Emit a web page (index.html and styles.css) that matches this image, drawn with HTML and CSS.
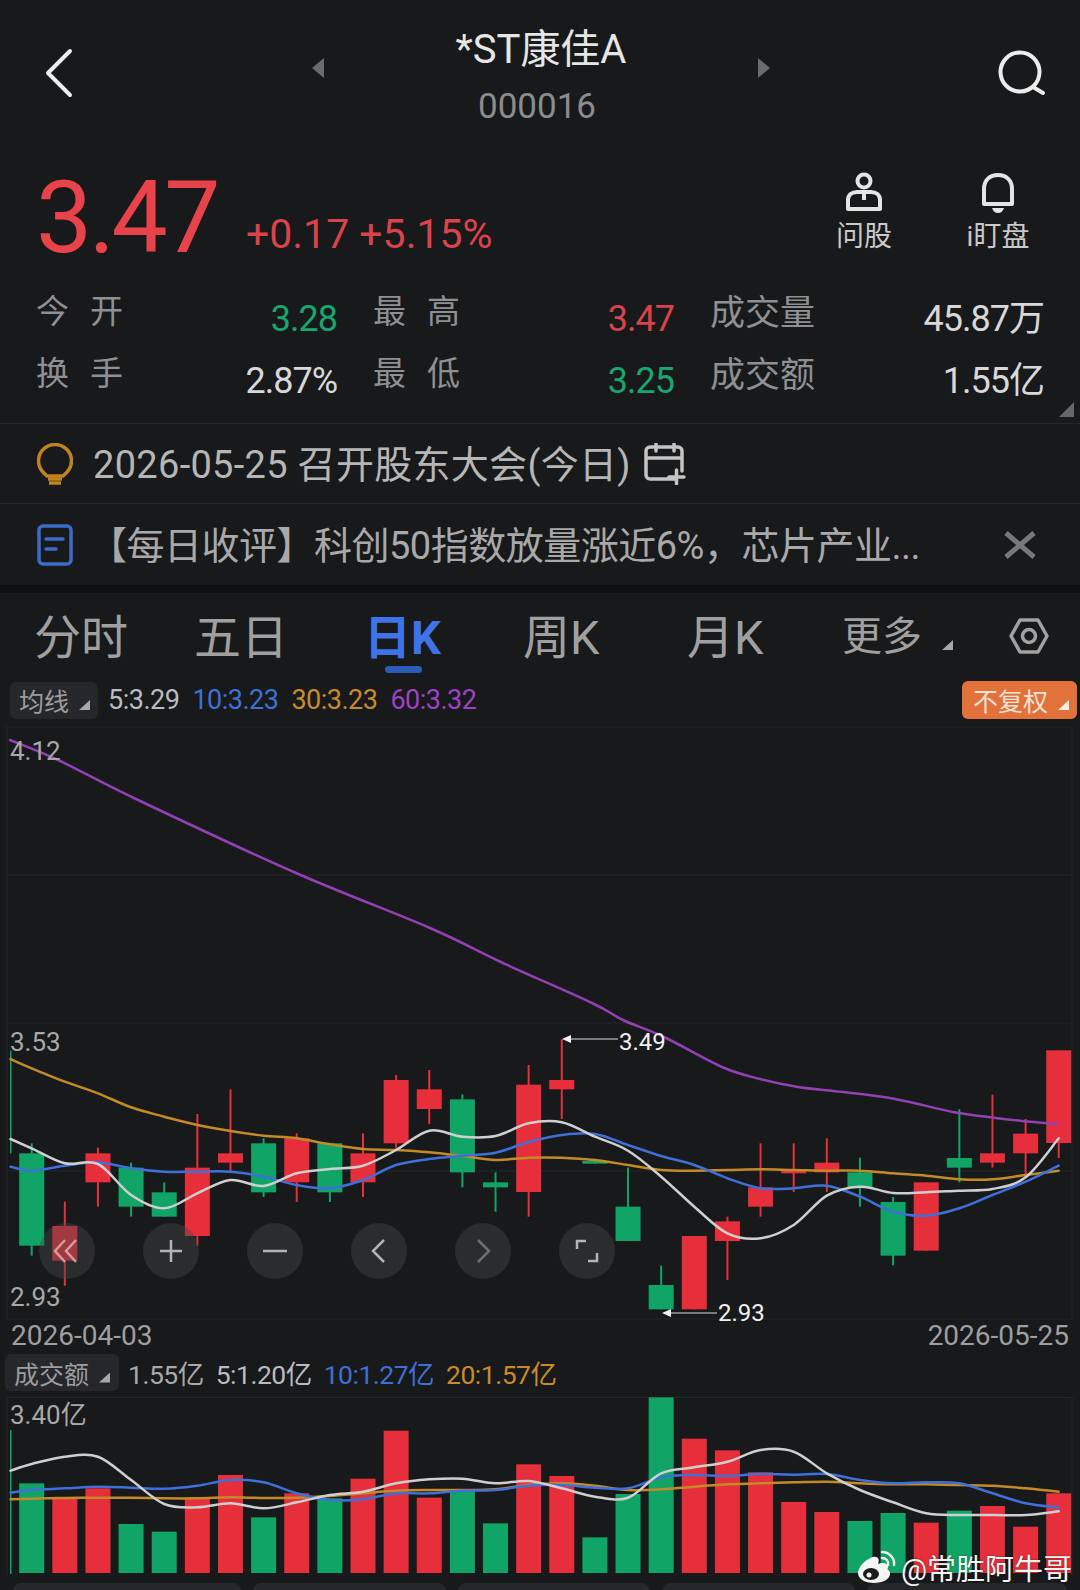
FILE: index.html
```html
<!DOCTYPE html>
<html>
<head>
    <title>*ST康佳A 000016</title>
    <meta charset="utf-8">
    <link rel="stylesheet" href="styles.css">
</head>
<body>
    <div class="page">
        <div class="header">
            <svg class="back-icon" width="30" height="50" viewBox="0 0 30 50"><path d="M25 3 3 25l22 22" /></svg>
            <span class="nav-tri nav-left"></span>
            <div class="title-box">
                <div class="title">*ST康佳A</div>
                <div class="code">000016</div>
            </div>
            <span class="nav-tri nav-right"></span>
            <svg class="search-icon" width="50" height="48" viewBox="0 0 50 48"><circle cx="23" cy="23" r="19.5" /><path d="M36 38l10 6" /></svg>
        </div>

        <div class="quote">
            <div class="price-row">
                <div class="price">3.47</div>
                <div class="change">+0.17 +5.15%</div>
                <div class="actions">
                    <div class="action">
                        <svg width="40" height="42" viewBox="0 0 40 42"><circle cx="20" cy="9" r="6.5" /><path d="M4 37V28c0-5 4-8 9-8h14c5 0 9 3 9 8v9z" /><path class="tie" d="M20 20v8" /></svg>
                        <span>问股</span>
                    </div>
                    <div class="action">
                        <svg width="40" height="42" viewBox="0 0 40 42"><path d="M6 32V17C6 8 12 3 20 3s14 5 14 14v15z" /><path class="solid" d="M14 36h12c-1 3-3 5-6 5s-5-2-6-5z" /></svg>
                        <span>i盯盘</span>
                    </div>
                </div>
            </div>
            <div class="stats">
                <div class="stat"><span class="stat-label wide">今开</span><span class="stat-value green">3.28</span></div>
                <div class="stat"><span class="stat-label wide">最高</span><span class="stat-value red">3.47</span></div>
                <div class="stat"><span class="stat-label">成交量</span><span class="stat-value">45.87万</span></div>
                <div class="stat"><span class="stat-label wide">换手</span><span class="stat-value">2.87%</span></div>
                <div class="stat"><span class="stat-label wide">最低</span><span class="stat-value green">3.25</span></div>
                <div class="stat"><span class="stat-label">成交额</span><span class="stat-value">1.55亿</span></div>
            </div>
            <span class="corner-tri"></span>
        </div>

        <div class="notice notice-event">
            <svg class="notice-icon" width="36" height="42" viewBox="0 0 36 42"><path class="bulb" d="M10 33C5 29 1.500 25 1.500 18a16.500 16.500 0 0 1 33 0c0 7-3.500 11-8.500 15z" /><path class="bulb-base" d="M11 36h14M12 40h12" /></svg>
            <span class="notice-text">2026-05-25 召开股东大会(今日)</span>
            <svg class="calendar-icon" width="42" height="42" viewBox="0 0 42 42"><path d="M30 36H6a4 4 0 0 1-4-4V8a4 4 0 0 1 4-4h28a4 4 0 0 1 4 4v20M2 15h36M12 1v7M30 1v7M25 34h15M32.500 27v14" /></svg>
        </div>

        <div class="notice notice-news">
            <svg class="notice-icon" width="36" height="42" viewBox="0 0 36 42"><rect class="doc" x="2" y="2" width="32" height="38" rx="4" /><path class="doc" d="M9 15h17M9 25h10" /></svg>
            <span class="notice-text news-text">【每日收评】科创50指数放量涨近6%，芯片产业...</span>
            <svg class="close-icon" width="32" height="28" viewBox="0 0 32 28"><path d="M2 2l28 24M30 2 2 26" /></svg>
        </div>

        <div class="band"></div>

        <div class="tabs">
            <span class="tab">分时</span>
            <span class="tab">五日</span>
            <span class="tab active">日K</span>
            <span class="tab">周K</span>
            <span class="tab">月K</span>
            <span class="tab more">更多<i class="more-tri"></i></span>
            <svg class="gear-icon" width="40" height="36" viewBox="0 0 40 36"><path d="M11 2h18l9 16-9 16H11L2 18z" /><circle cx="20" cy="18" r="6.500" /></svg>
        </div>

        <div class="ma-row">
            <span class="chip chip-ma">均线<i class="chip-tri"></i></span>
            <span class="ma ma5">5:3.29</span>
            <span class="ma ma10">10:3.23</span>
            <span class="ma ma30">30:3.23</span>
            <span class="ma ma60">60:3.32</span>
            <span class="chip chip-orange">不复权<i class="chip-tri"></i></span>
        </div>

        <div class="kline-wrap">
            <svg id="kline" class="chart" width="1080" height="606" viewBox="0 724 1080 606">
                <path class="grid" d="M7 727H1072M7 875H1072M7 1023H1072M7 1171H1072M7 1319H1072M7 727V1319M1072 727V1319" />
                <g id="kline-bars"></g>
                <g id="kline-lines"></g>
                <text class="axis" x="10" y="760">4.12</text>
                <text class="axis" x="10" y="1051">3.53</text>
                <text class="axis" x="10" y="1306">2.93</text>
                <path class="mark-line" d="M566 1039H618M666 1313H717" />
                <path class="mark-head" d="M562 1039l9-4v8zM662 1313l9-4v8z" />
                <text class="mark" x="619" y="1050">3.49</text>
                <text class="mark" x="718" y="1321">2.93</text>
            </svg>
            <div class="zoom-bar">
                <div class="zoom-btn"><svg width="32" height="32" viewBox="0 0 32 32"><path class="dim" d="M14 5 4 16l10 11M25 5 15 16l10 11" /></svg></div>
                <div class="zoom-btn"><svg width="32" height="32" viewBox="0 0 32 32"><path d="M16 5v22M5 16h22" /></svg></div>
                <div class="zoom-btn"><svg width="32" height="32" viewBox="0 0 32 32"><path d="M4 16h24" /></svg></div>
                <div class="zoom-btn"><svg width="32" height="32" viewBox="0 0 32 32"><path d="M21 5 10 16l11 11" /></svg></div>
                <div class="zoom-btn"><svg width="32" height="32" viewBox="0 0 32 32"><path class="faint" d="M11 5l11 11-11 11" /></svg></div>
                <div class="zoom-btn"><svg width="32" height="32" viewBox="0 0 32 32"><path d="M6 14V6h9M26 18v8h-9" /></svg></div>
            </div>
        </div>

        <div class="dates">
            <span>2026-04-03</span>
            <span>2026-05-25</span>
        </div>

        <div class="vol-row">
            <span class="chip chip-vol">成交额<i class="chip-tri"></i></span>
            <span class="ma vol-now">1.55亿</span>
            <span class="ma ma5">5:1.20亿</span>
            <span class="ma ma10">10:1.27亿</span>
            <span class="ma ma30">20:1.57亿</span>
        </div>

        <svg id="volume" class="chart" width="1080" height="178" viewBox="0 1397 1080 178">
            <path class="grid" d="M7 1397.500H1072M7 1397V1575M1072 1397V1575" />
            <g id="volume-bars"></g>
            <g id="volume-lines"></g>
            <text class="axis" x="10" y="1424">3.40亿</text>
        </svg>

        <div class="bottom-cards">
            <div class="card"></div>
            <div class="card"></div>
            <div class="card"></div>
            <div class="card"></div>
            <div class="card"></div>
        </div>

        <div class="watermark">
            <svg width="42" height="34" viewBox="0 0 42 34"><path class="wb-body" d="M2 23c0-6 8-14 15-16 5-1 7 2 5 7 4-2 10-1 10 3 0 1 0 2-1 2 2 1 3 3 3 5 0 5-7 9-16 9S2 29 2 23z" /><ellipse class="wb-eye" cx="15" cy="24" rx="8" ry="6" /><circle class="wb-body" cx="13" cy="25" r="2.500" /><path class="wb-arc" d="M26 2c7 0 13 6 12 13M26 8c4 0 7 3 6 7" /></svg>
            <span>@常胜阿牛哥</span>
        </div>
    </div>

    <script src="chart.js"></script>
</body>
</html>
```

FILE: styles.css
```css
* {
    box-sizing: border-box;
}
body {
    margin: 0;
    background: #18191b;
    font-family: Roboto, "Noto Sans CJK SC", sans-serif;
    font-weight: 400;
}
.page {
    position: relative;
    width: 1080px;
    height: 1590px;
    overflow: hidden;
    background: #18191b;
}

/* header */
.header {
    display: grid;
    grid-template-columns: 267px 12px 1fr 12px 277px;
    align-items: center;
    height: 146px;
    padding-left: 45px;
    padding-right: 33px;
}
.back-icon path {
    fill: none;
    stroke: #ececec;
    stroke-width: 4;
    stroke-linecap: round;
    stroke-linejoin: round;
}
.nav-tri {
    width: 12px;
    height: 20px;
    margin-bottom: 10px;
    background: #6a6b6d;
}
.nav-left {
    clip-path: polygon(100% 0, 100% 100%, 0 50%);
}
.nav-right {
    clip-path: polygon(0 0, 100% 50%, 0 100%);
}
.title-box {
    padding-top: 11px;
    text-align: center;
}
.title {
    font-size: 40px;
    line-height: 50px;
    color: #e6e6e6;
}
.code {
    margin-top: 7px;
    padding-right: 8px;
    font-size: 35px;
    line-height: 50px;
    color: #8b8c8e;
}
.search-icon {
    justify-self: end;
}
.search-icon circle, .search-icon path {
    fill: none;
    stroke: #ececec;
    stroke-width: 4;
    stroke-linecap: round;
}

/* quote */
.quote {
    position: relative;
    height: 278px;
    border-bottom: 1px solid #26272a;
}
.price-row {
    display: flex;
    align-items: flex-end;
    height: 132px;
    padding-left: 36px;
}
.price {
    font-size: 100px;
    line-height: 120px;
    letter-spacing: -3.500px;
    color: #e8424a;
}
.change {
    margin-left: 29px;
    padding-bottom: 19px;
    font-size: 41px;
    line-height: 50px;
    color: #d9434b;
}
.actions {
    align-self: flex-start;
    display: flex;
    margin-left: auto;
    margin-right: 50px;
    margin-top: 26px;
    gap: 70px;
}
.action {
    display: flex;
    flex-direction: column;
    align-items: center;
    width: 64px;
    color: #c9c9c9;
    font-size: 28px;
    line-height: 36px;
}
.action span {
    margin-top: 5px;
    white-space: nowrap;
}
.action svg path, .action svg circle {
    fill: none;
    stroke: #e4e4e4;
    stroke-width: 4;
    stroke-linejoin: round;
}
.action svg .solid {
    fill: #e4e4e4;
    stroke: none;
}
.stats {
    display: grid;
    grid-template-columns: 301px 301px 334px;
    column-gap: 36px;
    grid-auto-rows: 62px;
    padding-left: 36px;
}
.stat {
    display: flex;
    align-items: center;
    justify-content: space-between;
}
.stat-label {
    font-size: 35px;
    color: #8f9092;
}
.stat-label.wide {
    font-size: 33px;
    letter-spacing: 21px;
}
.stat-value {
    padding-top: 20px;
    font-size: 36px;
    line-height: 44px;
    color: #d8d8d8;
    letter-spacing: -1px;
}
.green {
    color: #1aa56e;
}
.red {
    color: #d9434b;
}
.corner-tri {
    position: absolute;
    right: 6px;
    bottom: 6px;
    width: 15px;
    height: 15px;
    background: #66676a;
    clip-path: polygon(100% 0, 100% 100%, 0 100%);
}

/* notices */
.notice {
    display: flex;
    align-items: center;
    padding-left: 37px;
    border-bottom: 1px solid #26272a;
}
.notice-event {
    height: 80px;
}
.notice-news {
    height: 81px;
    border-bottom: none;
}
.notice-text {
    margin-left: 20px;
    margin-bottom: 4px;
    font-size: 38px;
    letter-spacing: 0.3px;
    color: #b6b6b6;
    white-space: nowrap;
}
.news-text {
    margin-left: 16px;
    letter-spacing: -0.5px;
    color: #a9a9a9;
}
.notice-icon path, .notice-icon rect {
    fill: none;
    stroke-width: 3.500;
}
.bulb {
    stroke: #bd8420;
}
.bulb-base {
    stroke: #bd8420;
}
.doc {
    stroke: #3a6cc8;
    stroke-linecap: round;
}
.calendar-icon {
    margin-left: 13px;
}
.calendar-icon path {
    fill: none;
    stroke: #c4c4c4;
    stroke-width: 3.500;
    stroke-linecap: round;
}
.close-icon {
    margin-left: auto;
    margin-right: 44px;
}
.close-icon path {
    fill: none;
    stroke: #77787a;
    stroke-width: 5;
}
.band {
    height: 8px;
    background: #0f1012;
}

/* tabs */
.tabs {
    display: grid;
    grid-template-columns: 160px 170px 159px 164px 155px 1fr auto;
    align-items: center;
    height: 83px;
    padding: 0 31px 3px 34px;
}
.tab {
    font-size: 47px;
    color: #a0a0a0;
    white-space: nowrap;
}
.tab.active {
    position: relative;
    color: #3f74e8;
    font-weight: 700;
}
.tab.active::after {
    content: "";
    position: absolute;
    left: 21px;
    bottom: -5px;
    width: 37px;
    height: 7px;
    border-radius: 4px;
    background: #2d5cb4;
}
.tab.more {
    font-size: 40px;
}
.more-tri {
    display: inline-block;
    width: 11px;
    height: 10px;
    margin-left: 20px;
    background: #a8a8a8;
    clip-path: polygon(100% 0, 100% 100%, 0 100%);
}
.gear-icon {
    margin-top: 6px;
}
.gear-icon path, .gear-icon circle {
    fill: none;
    stroke: #a2a2a2;
    stroke-width: 3.500;
    stroke-linejoin: round;
}

/* ma rows */
.ma-row, .vol-row {
    display: flex;
    align-items: center;
}
.ma-row {
    gap: 13px;
    height: 48px;
    padding: 0 3px 0 10px;
    font-size: 27px;
}
.vol-row {
    gap: 12px;
    height: 45px;
    padding-left: 5px;
    padding-bottom: 4px;
    font-size: 26.500px;
}
.chip {
    display: flex;
    align-items: center;
    height: 37px;
    padding: 0 8px 0 9px;
    border-radius: 6px;
    background: #26272a;
    color: #9d9d9d;
    font-size: 25px;
}
.chip-tri {
    width: 11px;
    height: 10px;
    margin-left: 10px;
    margin-top: 10px;
    background: #a8a8a8;
    clip-path: polygon(100% 0, 100% 100%, 0 100%);
}
.chip-ma, .chip-vol {
    margin-right: -3px;
}
.chip-vol {
    padding-right: 9px;
}
.chip-orange {
    height: 38px;
    margin-left: auto;
    padding-left: 11px;
    padding-right: 8px;
    background: #e2723a;
    color: #f3e3d8;
}
.chip-orange .chip-tri {
    background: #f6efe9;
}
.ma {
    letter-spacing: -0.5px;
}
.ma5 {
    color: #b9bcc2;
}
.ma10 {
    color: #3f70d4;
}
.ma30 {
    color: #c98a2e;
}
.ma60 {
    color: #9d42c4;
}
.vol-now {
    color: #a9a9a9;
}

/* charts */
.chart {
    display: block;
}
.grid {
    fill: none;
    stroke: #252629;
    stroke-width: 1;
}
.axis {
    font-size: 26px;
    fill: #a8a8a8;
}
.mark {
    font-size: 24px;
    fill: #f0f0f0;
}
.mark-line {
    fill: none;
    stroke: #9a9a9a;
    stroke-width: 1.500;
}
.mark-head {
    fill: #f2f2f2;
}
.ma-line {
    fill: none;
    stroke-width: 2.500;
    stroke-linejoin: round;
    stroke-linecap: round;
}
.kline-wrap {
    position: relative;
    height: 600px;
}
.zoom-bar {
    position: absolute;
    left: 39px;
    top: 499px;
    display: flex;
    gap: 48px;
}
.zoom-btn {
    display: flex;
    align-items: center;
    justify-content: center;
    width: 56px;
    height: 56px;
    border-radius: 50%;
    background: rgba(72, 72, 74, 0.42);
}
.zoom-btn path {
    fill: none;
    stroke: #b4b4b4;
    stroke-width: 2.500;
}
.zoom-btn path.dim {
    stroke: rgba(230, 190, 190, 0.75);
}
.zoom-btn path.faint {
    stroke: #6f6f70;
}

/* dates */
.dates {
    display: flex;
    justify-content: space-between;
    align-items: center;
    height: 28px;
    padding: 0 11px 6px;
    font-size: 28px;
    color: #9f9f9f;
}

/* bottom */
.bottom-cards {
    display: grid;
    grid-template-columns: 228px 193px 192px 193px 200px;
    column-gap: 12px;
    padding: 8px 0 0 13px;
}
.card {
    height: 20px;
    border-radius: 8px 8px 0 0;
    background: #26272a;
}
.watermark {
    position: absolute;
    left: 856px;
    top: 1546px;
    display: flex;
    align-items: center;
    gap: 3px;
    font-size: 29px;
    color: #f4f4f4;
    text-shadow: 0 0 2px rgba(0, 0, 0, 0.5);
    white-space: nowrap;
}
.wb-body {
    fill: #f6f6f6;
}
.wb-eye {
    fill: #1c1c1c;
}
.wb-arc {
    fill: none;
    stroke: #f0f0f0;
    stroke-width: 2.500;
    stroke-linecap: round;
}
```

FILE: chart.js
```js
const RED = "#e62f3a";
const GREEN = "#10a566";
const BAR_W = 25;
const NS = "http://www.w3.org/2000/svg";

// wick top, body top, body bottom, wick bottom, green?
const candles = [
    [370, 400, 677, 707, 1], [545, 618, 722, 797, 0], [383, 400, 487, 560, 0], [428, 443, 560, 590, 1],
    [487, 517, 590, 590, 1], [282, 443, 648, 677, 0], [208, 400, 428, 457, 0], [355, 370, 517, 531, 1],
    [340, 355, 487, 546, 0], [370, 370, 517, 546, 1], [340, 400, 487, 531, 0], [165, 180, 370, 385, 0],
    [150, 208, 267, 312, 0], [223, 238, 457, 502, 1], [457, 487, 502, 575, 1], [135, 194, 516, 590, 0],
    [58, 180, 208, 297, 0], [423, 423, 431, 431, 1], [443, 560, 663, 663, 1], [737, 795, 868, 868, 1],
    [648, 648, 868, 868, 0], [590, 604, 663, 780, 0], [370, 502, 560, 590, 0], [370, 453, 460, 516, 0],
    [355, 428, 457, 516, 0], [413, 457, 502, 560, 1], [531, 546, 707, 736, 1], [487, 487, 692, 692, 0],
    [268, 414, 443, 487, 1], [224, 400, 428, 443, 0], [297, 341, 400, 472, 0], [91, 91, 369, 414, 0]
];

// first value of each average sits on the left edge, the rest on the candle centres
const ma5 = [357, 385, 430, 432, 525, 565, 520, 480, 498, 460, 447, 437, 390, 332, 350, 348, 310, 307, 350, 392, 470, 560, 640, 655, 615, 527, 500, 519, 517, 512, 507, 472, 355];
const ma10 = [440, 452, 437, 427, 445, 455, 455, 455, 470, 495, 505, 480, 435, 417, 407, 398, 366, 345, 342, 375, 408, 435, 475, 505, 505, 497, 530, 575, 587, 565, 525, 485, 437];
const ma30 = [117, 145, 185, 220, 262, 290, 315, 333, 347, 355, 373, 387, 390, 397, 408, 420, 413, 413, 420, 435, 450, 452, 450, 448, 450, 452, 452, 460, 467, 478, 478, 465, 452];
const ma60 = [[10, 740], [58, 760], [138, 800], [296, 873], [430, 928], [503, 963], [592, 1003], [623, 1020], [664, 1037], [722, 1067], [760, 1079], [798, 1087], [843, 1092], [895, 1099], [953, 1112], [988, 1117], [1022, 1121], [1058, 1124]];

// volume bar tops, same order as the candles
const volTops = [430, 475, 445, 552, 575, 473, 405, 532, 460, 475, 416, 272, 473, 452, 550, 373, 408, 592, 462, 172, 296, 331, 397, 486, 516, 543, 519, 548, 512, 498, 560, 460];
const volMa5 = [392, 372, 350, 350, 420, 492, 502, 490, 505, 487, 465, 455, 430, 418, 416, 430, 423, 445, 470, 473, 400, 382, 365, 330, 335, 400, 450, 487, 520, 525, 525, 525, 514];
const volMa10 = [458, 450, 445, 440, 443, 446, 437, 420, 427, 460, 480, 478, 460, 460, 452, 450, 437, 435, 443, 445, 412, 405, 408, 402, 404, 402, 420, 430, 427, 430, 460, 490, 503];
const volMa20 = [478, 476, 474, 473, 473, 475, 475, 472, 474, 473, 468, 460, 452, 450, 450, 448, 435, 430, 437, 450, 448, 440, 433, 430, 427, 425, 430, 433, 433, 435, 437, 445, 455];

const kY = v => 1020 + v / 3;
const volY = v => 1340 + v / 3;
const centerX = i => 31.7 + 33.13 * i;

function add(parent, tag, attrs) {
    const el = document.createElementNS(NS, tag);
    for (const key in attrs) el.setAttribute(key, attrs[key]);
    parent.appendChild(el);
    return el;
}

// catmull-rom through the points
function smooth(pts) {
    let d = `M${pts[0][0]} ${pts[0][1]}`;
    for (let i = 0; i < pts.length - 1; i++) {
        const p0 = pts[i - 1] || pts[i], p1 = pts[i], p2 = pts[i + 1], p3 = pts[i + 2] || p2;
        const c1x = p1[0] + (p2[0] - p0[0]) / 6, c1y = p1[1] + (p2[1] - p0[1]) / 6;
        const c2x = p2[0] - (p3[0] - p1[0]) / 6, c2y = p2[1] - (p3[1] - p1[1]) / 6;
        d += `C${c1x.toFixed(1)} ${c1y.toFixed(1)} ${c2x.toFixed(1)} ${c2y.toFixed(1)} ${p2[0].toFixed(1)} ${p2[1].toFixed(1)}`;
    }
    return d;
}

function drawLine(parent, pts, color) {
    add(parent, "path", { class: "ma-line", d: smooth(pts), stroke: color });
}

const onCandles = (values, toY) => values.map((v, i) => [i === 0 ? 10.5 : centerX(i - 1), toY(v)]);

const klineBars = document.getElementById("kline-bars");
const klineLines = document.getElementById("kline-lines");
const volBars = document.getElementById("volume-bars");
const volLines = document.getElementById("volume-lines");

// the candle cut off by the left edge
add(klineBars, "rect", { x: 10, y: kY(92), width: 1.5, height: kY(400) - kY(92), fill: GREEN });
add(volBars, "rect", { x: 10, y: volY(270), width: 1.5, height: 144, fill: GREEN });

candles.forEach((c, i) => {
    const x = centerX(i);
    const color = c[4] ? GREEN : RED;
    add(klineBars, "rect", { x: x - 1, y: kY(c[0]), width: 2, height: kY(c[3]) - kY(c[0]), fill: color });
    add(klineBars, "rect", { x: x - BAR_W / 2, y: kY(c[1]), width: BAR_W, height: kY(c[2]) - kY(c[1]), fill: color });
    add(volBars, "rect", { x: x - BAR_W / 2, y: volY(volTops[i]), width: BAR_W, height: 1573 - volY(volTops[i]), fill: color });
});

drawLine(klineLines, ma60, "#9240b4");
drawLine(klineLines, onCandles(ma30, kY), "#c48a26");
drawLine(klineLines, onCandles(ma10, kY), "#3f6fd8");
drawLine(klineLines, onCandles(ma5, kY), "#cfcfd1");

drawLine(volLines, onCandles(volMa20, volY), "#c48a26");
drawLine(volLines, onCandles(volMa10, volY), "#3f6fd8");
drawLine(volLines, onCandles(volMa5, volY), "#cfcfd1");
```
